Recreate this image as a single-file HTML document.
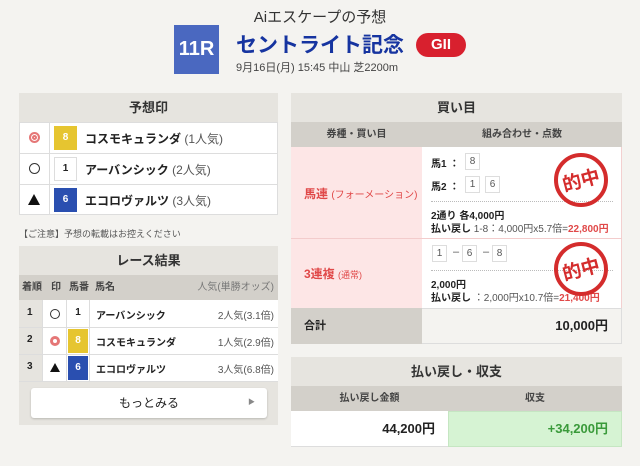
<!DOCTYPE html>
<html><head><meta charset="utf-8"><style>
*{box-sizing:border-box;margin:0;padding:0}
body{width:640px;height:466px;background:#f4f3f0;font-family:"Liberation Sans","Noto Sans CJK JP",sans-serif;color:#222;position:relative;overflow:hidden;font-size:11px}
.a{position:absolute}
.hd{background:#e6e4df;text-align:center;font-weight:bold;font-size:13px;color:#333}
.sh{background:#d3d0ca;text-align:center;font-weight:bold;font-size:10px;color:#444}
.b{border:1px solid #ddd}
.num{display:inline-block;text-align:center;font-weight:bold;font-size:10px}
.box{position:absolute;width:15px;height:17px;border:1px solid #ddd;background:#fff;font-size:10px;color:#555;text-align:center;line-height:15px}
</style></head><body>
<div class="a" style="left:0;width:640px;top:6px;text-align:center;font-size:15px;color:#333">Aiエスケープの予想</div>
<div class="a" style="left:174px;top:25px;width:45px;height:49px;background:#4a68c0;color:#fff;font-weight:bold;font-size:20px;text-align:center;line-height:49px">11R</div>
<div class="a" style="left:236px;top:29px;font-size:21px;font-weight:bold;color:#1634a0">セントライト記念</div>
<div class="a" style="left:416px;top:33px;width:50px;height:24px;border-radius:12px;background:#d8202e;color:#fff;font-weight:bold;font-size:15px;text-align:center;line-height:24px">GII</div>
<div class="a" style="left:236px;top:59px;font-size:11px;color:#444">9月16日(月) 15:45 中山 芝2200m</div>

<div class="a hd" style="left:19px;top:93px;width:259px;height:29px;line-height:29px">予想印</div>
<div class="a b" style="left:19px;top:122px;width:259px;height:93px;background:#fff"></div>
<div class="a" style="left:19px;top:122px;width:31px;height:93px;border-right:1px solid #ddd"></div>
<div class="a" style="left:19px;top:153px;width:259px;border-top:1px solid #ddd"></div>
<div class="a" style="left:19px;top:184px;width:259px;border-top:1px solid #ddd"></div>
<div class="a" style="left:29px;top:132px;width:11px;height:11px;border-radius:50%;border:2px solid #e57777;box-shadow:inset 0 0 0 1px #fff,inset 0 0 0 3px #e57777"></div>
<div class="a" style="left:29px;top:163px;width:11px;height:11px;border-radius:50%;border:1px solid #333"></div>
<div class="a" style="left:28px;top:194px;width:0;height:0;border-left:6px solid transparent;border-right:6px solid transparent;border-bottom:11px solid #111"></div>
<div class="a num" style="left:54px;top:126px;width:23px;height:24px;line-height:24px;background:#e6c530;color:#fff">8</div>
<div class="a num" style="left:54px;top:157px;width:23px;height:24px;line-height:22px;border:1px solid #ddd;color:#222">1</div>
<div class="a num" style="left:54px;top:188px;width:23px;height:24px;line-height:24px;background:#2a4fb0;color:#fff">6</div>
<div class="a" style="left:85px;top:130px;font-size:12px;font-weight:bold">コスモキュランダ <span style="font-weight:normal;color:#555">(1人気)</span></div>
<div class="a" style="left:85px;top:161px;font-size:12px;font-weight:bold">アーバンシック <span style="font-weight:normal;color:#555">(2人気)</span></div>
<div class="a" style="left:85px;top:192px;font-size:12px;font-weight:bold">エコロヴァルツ <span style="font-weight:normal;color:#555">(3人気)</span></div>
<div class="a" style="left:19px;top:227px;font-size:9px;color:#555">【ご注意】予想の転載はお控えください</div>

<div class="a" style="left:19px;top:246px;width:259px;height:179px;background:#e6e4df"></div>
<div class="a hd" style="left:19px;top:246px;width:259px;height:29px;line-height:29px">レース結果</div>
<div class="a sh" style="left:19px;top:275px;width:259px;height:25px;line-height:25px;text-align:left"><span style="position:absolute;left:3px">着順</span><span style="position:absolute;left:32px">印</span><span style="position:absolute;left:50px">馬番</span><span style="position:absolute;left:76px">馬名</span><span style="position:absolute;right:4px;font-weight:normal;color:#777">人気(単勝オッズ)</span></div>
<div class="a" style="left:43px;top:300px;width:235px;height:81px;background:#fff"></div>
<div class="a" style="left:19px;top:300px;width:24px;height:81px;background:#e6e4df;border-right:1px solid #ddd"></div>
<div class="a" style="left:19px;top:327px;width:259px;border-top:1px solid #ddd"></div>
<div class="a" style="left:19px;top:354px;width:259px;border-top:1px solid #ddd"></div>
<div class="a" style="left:19px;top:381px;width:259px;border-top:1px solid #ddd"></div>
<div class="a" style="left:66px;top:300px;width:24px;height:81px;border-left:1px solid #ddd;border-right:1px solid #ddd"></div>
<div class="a" style="left:27px;top:307px;font-weight:bold;font-size:10px">1</div>
<div class="a" style="left:27px;top:334px;font-weight:bold;font-size:10px">2</div>
<div class="a" style="left:27px;top:361px;font-weight:bold;font-size:10px">3</div>
<div class="a" style="left:50px;top:309px;width:10px;height:10px;border-radius:50%;border:1px solid #333"></div>
<div class="a" style="left:50px;top:336px;width:10px;height:10px;border-radius:50%;border:3px solid #e57777"></div>
<div class="a" style="left:50px;top:363px;width:0;height:0;border-left:5px solid transparent;border-right:5px solid transparent;border-bottom:9px solid #111"></div>
<div class="a num" style="left:67px;top:307px;width:22px">1</div>
<div class="a num" style="left:68px;top:329px;width:20px;height:24px;line-height:24px;background:#e6c530;color:#fff">8</div>
<div class="a num" style="left:68px;top:356px;width:20px;height:24px;line-height:24px;background:#2a4fb0;color:#fff">6</div>
<div class="a" style="left:96px;top:307px;font-weight:bold;font-size:10px">アーバンシック</div>
<div class="a" style="left:96px;top:334px;font-weight:bold;font-size:10px">コスモキュランダ</div>
<div class="a" style="left:96px;top:361px;font-weight:bold;font-size:10px">エコロヴァルツ</div>
<div class="a" style="right:366px;top:307px;font-size:10px;color:#555">2人気(3.1倍)</div>
<div class="a" style="right:366px;top:334px;font-size:10px;color:#555">1人気(2.9倍)</div>
<div class="a" style="right:366px;top:361px;font-size:10px;color:#555">3人気(6.8倍)</div>
<div class="a" style="left:31px;top:388px;width:236px;height:30px;background:#fff;border-radius:3px;box-shadow:0 1px 2px rgba(0,0,0,.2);text-align:center;line-height:30px;font-size:12px">もっとみる<span style="position:absolute;right:12px;font-size:7px;color:#888">▶</span></div>

<div class="a hd" style="left:291px;top:93px;width:331px;height:29px;line-height:29px">買い目</div>
<div class="a sh" style="left:291px;top:122px;width:131px;height:25px;line-height:25px">券種・買い目</div>
<div class="a sh" style="left:422px;top:122px;width:200px;height:25px;line-height:25px">組み合わせ・点数</div>
<div class="a" style="left:291px;top:147px;width:131px;height:161px;background:#fde6e6"></div>
<div class="a" style="left:422px;top:147px;width:200px;height:161px;background:#fff;border-right:1px solid #f3d0d0"></div>
<div class="a" style="left:291px;top:238px;width:331px;border-top:1px solid #f3cccc"></div>
<div class="a" style="left:304px;top:185px;color:#e04848;font-weight:bold;font-size:12px">馬連 <span style="font-weight:normal;font-size:10px">(フォーメーション)</span></div>
<div class="a" style="left:304px;top:265px;color:#e04848;font-weight:bold;font-size:12px">3連複 <span style="font-weight:normal;font-size:9px">(通常)</span></div>
<div class="a" style="left:431px;top:155px;font-weight:bold;font-size:10px">馬1 ：</div>
<div class="box" style="left:465px;top:153px">8</div>
<div class="a" style="left:431px;top:178px;font-weight:bold;font-size:10px">馬2 ：</div>
<div class="box" style="left:465px;top:176px">1</div><div class="box" style="left:485px;top:176px">6</div>
<div class="a" style="left:431px;top:201px;width:182px;border-top:1px dotted #bbb"></div>
<div class="a" style="left:431px;top:207px;font-weight:bold;font-size:10px">2通り 各4,000円</div>
<div class="a" style="left:431px;top:220px;font-size:10px;color:#555"><b style="color:#222">払い戻し</b> 1-8：4,000円x5.7倍=<b style="color:#e04848">22,800円</b></div>
<div class="box" style="left:432px;top:245px">1</div><div class="a" style="left:453px;top:246px;color:#555">–</div>
<div class="box" style="left:462px;top:245px">6</div><div class="a" style="left:483px;top:246px;color:#555">–</div>
<div class="box" style="left:492px;top:245px">8</div>
<div class="a" style="left:431px;top:270px;width:182px;border-top:1px dotted #bbb"></div>
<div class="a" style="left:431px;top:276px;font-weight:bold;font-size:10px">2,000円</div>
<div class="a" style="left:431px;top:289px;font-size:10px;color:#555"><b style="color:#222">払い戻し</b> ：2,000円x10.7倍=<b style="color:#e04848">21,400円</b></div>
<svg class="a" style="left:552px;top:151px" width="58" height="58" viewBox="0 0 58 58"><circle cx="29" cy="29" r="25" fill="none" stroke="#d42c2c" stroke-width="4"/><text x="29" y="36" text-anchor="middle" font-size="19" font-weight="bold" fill="#d42c2c" font-family="Noto Sans CJK JP,sans-serif" transform="rotate(-15 29 29)">的中</text></svg>
<svg class="a" style="left:552px;top:240px" width="58" height="58" viewBox="0 0 58 58"><circle cx="29" cy="29" r="25" fill="none" stroke="#d42c2c" stroke-width="4"/><text x="29" y="36" text-anchor="middle" font-size="19" font-weight="bold" fill="#d42c2c" font-family="Noto Sans CJK JP,sans-serif" transform="rotate(-15 29 29)">的中</text></svg>
<div class="a" style="left:291px;top:308px;width:131px;height:36px;background:#d3d0ca;line-height:36px;padding-left:13px;font-weight:bold;font-size:11px">合計</div>
<div class="a" style="left:422px;top:308px;width:200px;height:36px;background:#f4f3f0;border:1px solid #ddd;border-left:0;text-align:right;padding-right:13px;line-height:34px;font-weight:bold;font-size:13px">10,000円</div>

<div class="a hd" style="left:291px;top:357px;width:331px;height:29px;line-height:29px">払い戻し・収支</div>
<div class="a sh" style="left:291px;top:386px;width:157px;height:25px;line-height:25px">払い戻し金額</div>
<div class="a sh" style="left:448px;top:386px;width:174px;height:25px;line-height:25px">収支</div>
<div class="a" style="left:291px;top:411px;width:157px;height:36px;background:#fff;border-bottom:1px solid #ddd;text-align:right;padding-right:13px;line-height:36px;font-weight:bold;font-size:13px">44,200円</div>
<div class="a" style="left:448px;top:411px;width:174px;height:36px;background:#d6f3d3;border:1px solid #c5e6c2;text-align:right;padding-right:13px;line-height:34px;font-weight:bold;font-size:13px;color:#3a9a3a">+34,200円</div>
</body></html>
